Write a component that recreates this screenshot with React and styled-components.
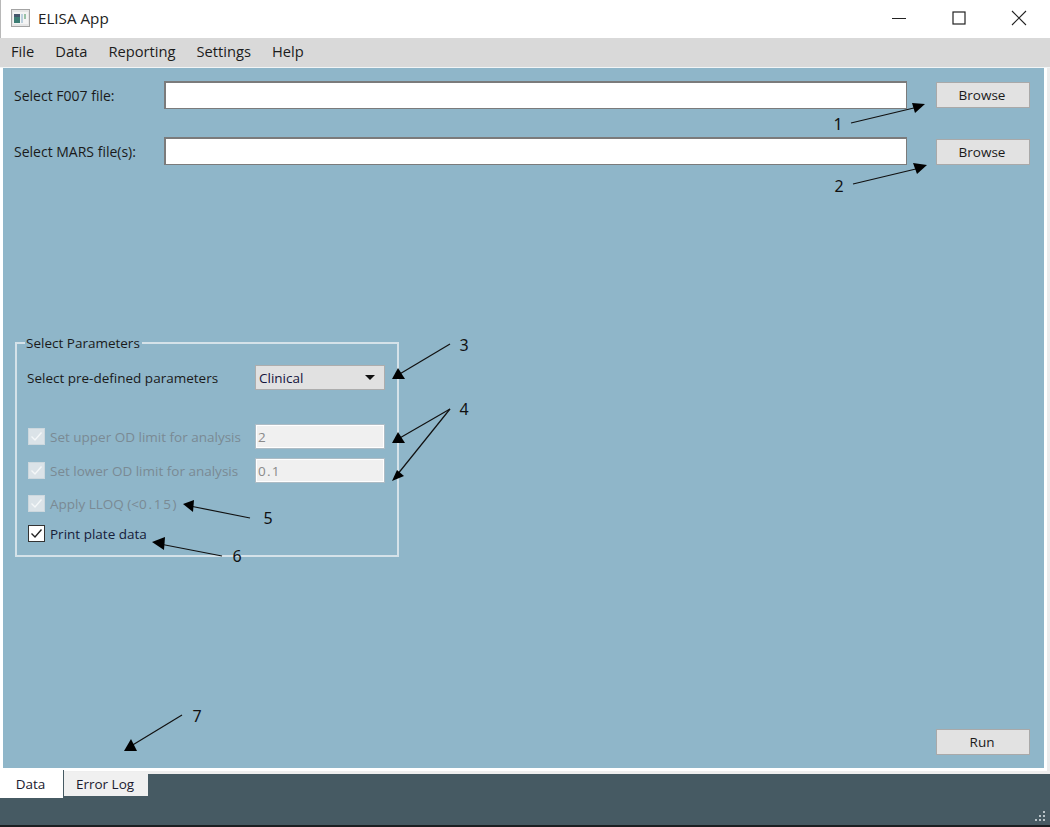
import React from "react";
import styled, { createGlobalStyle } from "styled-components";

const GlobalStyle = createGlobalStyle`
  html, body {
    margin: 0;
    padding: 0;
    overflow: hidden;
    background: #fff;
  }
  * {
    box-sizing: border-box;
  }
`;

const Window = styled.div`
  position: relative;
  width: 1050px;
  height: 827px;
  display: flex;
  flex-direction: column;
  font-family: "Open Sans", "Noto Sans", sans-serif;
  font-size: 13.5px;
  color: #1a1a1a;
  background: #fff;
  overflow: hidden;
`;

const TitleBar = styled.div`
  height: 38px;
  display: flex;
  align-items: center;
  background: #fff;
  padding: 0 1px 3px 10px;
  border-left: 1px solid #b8b8b8;
  flex-shrink: 0;
`;

const Title = styled.span`
  margin-left: 8px;
  font-size: 15.2px;
  color: #222;
  flex: 1;
`;

const WinControl = styled.div`
  width: 60px;
  height: 35px;
  display: flex;
  align-items: center;
  justify-content: center;
`;

const MenuBar = styled.div`
  height: 30px;
  display: flex;
  align-items: center;
  gap: 21px;
  padding: 0 0 3px 11px;
  background: #d9d9d9;
  border-bottom: 1px solid #f2f5f6;
  font-size: 14.7px;
  flex-shrink: 0;
`;

const MenuItem = styled.span`
  color: #1c1c1c;
`;

const Frame = styled.div`
  height: 703px;
  padding: 0 3px 3px 3px;
  background: #fff;
  border-right: 3px solid #ececec;
  flex-shrink: 0;
`;

const Panel = styled.main`
  height: 700px;
  background: #8fb6c9;
  padding: 13px 14px 13px 11px;
  display: flex;
  flex-direction: column;
`;

const FileRow = styled.div`
  display: flex;
  align-items: center;
  height: 28px;
  margin-bottom: 28px;
`;

const FileLabel = styled.label`
  width: 150px;
  flex-shrink: 0;
  font-size: 14px;
`;

const FileInput = styled.input`
  flex: 1;
  height: 28px;
  border: 1px solid #7b7b7b;
  border-width: 2px 1px 1px 2px;
  background: #fff;
  outline: none;
`;

const Button = styled.button`
  width: 94px;
  height: 26px;
  margin-left: 29px;
  margin-top: ${({ $nudge }) => $nudge || 0}px;
  background: #e2e2e2;
  border: 1px solid #a9a9a9;
  font-family: inherit;
  font-size: 13.5px;
  color: #1a1a1a;
  padding: 0 2px 0 0;
`;

const GroupBox = styled.fieldset`
  width: 384px;
  height: 223px;
  margin: 141px 0 0 1px;
  padding: 0 12px 0 10px;
  border: 2px solid #d5e2e9;
  border-radius: 0;
`;

const GroupLegend = styled.legend`
  margin-left: -2px;
  padding: 0 2px 0 1px;
  line-height: 18px;
`;

const ParamRow = styled.div`
  display: flex;
  align-items: center;
  height: 25px;
  margin-top: ${({ $top }) => $top}px;
`;

const ParamLabel = styled.span`
  width: 228px;
  flex-shrink: 0;
`;

const SelectBox = styled.div`
  width: 130px;
  height: 25px;
  display: flex;
  align-items: center;
  justify-content: space-between;
  padding: 0 9px 0 3px;
  background: #e1e1e1;
  border: 1px solid #adadad;
  color: #14143c;
`;

const Caret = styled.span`
  width: 0;
  height: 0;
  border-left: 5px solid transparent;
  border-right: 5px solid transparent;
  border-top: 5px solid #111;
`;

const CheckLabel = styled.label`
  display: flex;
  align-items: center;
  gap: 5px;
  width: 228px;
  padding-left: 1px;
  flex-shrink: 0;
  color: ${({ $off }) => ($off ? "#7a8a94" : "#16203a")};
`;

const CheckBox = styled.span`
  width: 17px;
  height: 17px;
  display: flex;
  align-items: center;
  justify-content: center;
  background: ${({ $off }) => ($off ? "#dbe3e8" : "#fff")};
  border: 1px solid ${({ $off }) => ($off ? "#cdd8de" : "#333")};
  flex-shrink: 0;
`;

const Spaced = styled.span`
  letter-spacing: 1.7px;
`;

const LimitInput = styled.input`
  width: 130px;
  height: 25px;
  padding: 0 2px;
  background: #f0f0f0;
  border: 1px solid #aebcc5;
  box-shadow: inset 0 0 0 1px #fff;
  font-family: inherit;
  font-size: 13.5px;
  letter-spacing: 1.2px;
  color: #8a8a8a;
  outline: none;
`;

const Spacer = styled.div`
  flex: 1;
`;

const RunRow = styled.div`
  display: flex;
  justify-content: flex-end;
`;

const TabStrip = styled.div`
  flex: 1;
  position: relative;
  display: flex;
  align-items: flex-start;
  background: linear-gradient(#eeeeee 0 3px, #465a63 3px);
`;

const Tab = styled.div`
  height: ${({ $active }) => ($active ? 28 : 24)}px;
  width: ${({ $width }) => $width}px;
  margin-top: ${({ $active }) => ($active ? -1 : 1)}px;
  display: flex;
  align-items: center;
  justify-content: center;
  padding-right: 2px;
  background: ${({ $active }) => ($active ? "#fff" : "#f0f0f0")};
  border-right: ${({ $active }) => ($active ? "1px solid #465a63" : "0")};
  color: #1a1a2e;
`;

const BottomEdge = styled.div`
  position: absolute;
  left: 0;
  right: 0;
  bottom: 0;
  height: 2px;
  background: #1b1f22;
`;

const Grip = styled.svg`
  position: absolute;
  right: 4px;
  bottom: 4px;
`;

const Overlay = styled.svg`
  position: absolute;
  left: 0;
  top: 0;
  pointer-events: none;
`;

const Callout = styled.text`
  font-family: "Noto Sans", "Open Sans", sans-serif;
  font-size: 16px;
  fill: #111;
  text-anchor: middle;
`;

const arrows = [
  { n: "1", at: [838, 130], from: [851, 123], to: [918, 107], head: "925,104 912,103 915,113" },
  { n: "2", at: [839, 192], from: [853, 184], to: [920, 168], head: "927,165 913,163 917,174" },
  { n: "3", at: [464, 351], from: [450, 344], to: [398, 375], head: "392,379 405,379 398,368" },
  { n: "4", at: [464, 415], from: [450, 409], to: [398, 439], head: "392,443 405,443 398,432" },
  { n: null, from: [450, 409], to: [397, 475], head: "392,481 404,476 397,470" },
  { n: "5", at: [268, 524], from: [250, 518], to: [190, 506], head: "183,504 194,500 193,512" },
  { n: "6", at: [237, 562], from: [222, 556], to: [160, 544], head: "152,542 165,537 164,550" },
  { n: "7", at: [197, 722], from: [182, 715], to: [131, 746], head: "124,751 137,751 131,739" },
];

function AppIcon() {
  return (
    <svg width="19" height="18" viewBox="0 0 19 18">
      <rect x="0.5" y="0.5" width="18" height="17" fill="#e6e6e6" stroke="#a3a3a3" />
      <rect x="2" y="3" width="15" height="12" fill="#f4f4f4" />
      <rect x="3" y="5" width="6" height="9" fill="#3d7d74" />
      <rect x="3" y="5" width="6" height="3" fill="#45566b" />
      <rect x="10" y="5" width="2" height="9" fill="#bcd0de" />
      <rect x="13" y="5" width="2" height="5" fill="#9ac3a7" />
    </svg>
  );
}

function Tick({ color }) {
  return (
    <svg width="13" height="11" viewBox="0 0 13 11">
      <path d="M1.5 5.5 L5 9 L11.5 1.5" fill="none" stroke={color} strokeWidth="1.4" />
    </svg>
  );
}

function CheckOption({ off, children }) {
  return (
    <CheckLabel $off={off}>
      <CheckBox $off={off}>
        <Tick color={off ? "#f4f7f8" : "#222"} />
      </CheckBox>
      {children}
    </CheckLabel>
  );
}

export default function App() {
  return (
    <>
      <GlobalStyle />
      <Window>
        <TitleBar>
          <AppIcon />
          <Title>ELISA App</Title>
          <WinControl>
            <svg width="14" height="14" viewBox="0 0 14 14">
              <path d="M0 7.5 H14" stroke="#222" strokeWidth="1" />
            </svg>
          </WinControl>
          <WinControl>
            <svg width="14" height="14" viewBox="0 0 14 14">
              <rect x="1" y="1" width="12" height="12" fill="none" stroke="#222" strokeWidth="1.2" />
            </svg>
          </WinControl>
          <WinControl>
            <svg width="16" height="16" viewBox="0 0 16 16">
              <path d="M1 1 L15 15 M15 1 L1 15" stroke="#222" strokeWidth="1.1" />
            </svg>
          </WinControl>
        </TitleBar>
        <MenuBar>
          <MenuItem>File</MenuItem>
          <MenuItem>Data</MenuItem>
          <MenuItem>Reporting</MenuItem>
          <MenuItem>Settings</MenuItem>
          <MenuItem>Help</MenuItem>
        </MenuBar>
        <Frame>
          <Panel>
            <FileRow>
              <FileLabel>Select F007 file:</FileLabel>
              <FileInput readOnly />
              <Button>Browse</Button>
            </FileRow>
            <FileRow>
              <FileLabel>Select MARS file(s):</FileLabel>
              <FileInput readOnly />
              <Button $nudge={2}>Browse</Button>
            </FileRow>
            <GroupBox>
              <GroupLegend>Select Parameters</GroupLegend>
              <ParamRow $top={13}>
                <ParamLabel>Select pre-defined parameters</ParamLabel>
                <SelectBox>
                  Clinical
                  <Caret />
                </SelectBox>
              </ParamRow>
              <ParamRow $top={34}>
                <CheckOption off>Set upper OD limit for analysis</CheckOption>
                <LimitInput disabled value="2" readOnly />
              </ParamRow>
              <ParamRow $top={9}>
                <CheckOption off>Set lower OD limit for analysis</CheckOption>
                <LimitInput disabled value="0.1" readOnly />
              </ParamRow>
              <ParamRow $top={8}>
                <CheckOption off>
                  <span>
                    Apply LLOQ (&lt;<Spaced>0.15</Spaced>)
                  </span>
                </CheckOption>
              </ParamRow>
              <ParamRow $top={5}>
                <CheckOption>Print plate data</CheckOption>
              </ParamRow>
            </GroupBox>
            <Spacer />
            <RunRow>
              <Button>Run</Button>
            </RunRow>
          </Panel>
        </Frame>
        <TabStrip>
          <Tab $active $width={64}>Data</Tab>
          <Tab $width={84}>Error Log</Tab>
          <Grip width="12" height="12" viewBox="0 0 12 12">
            <g fill="#b9c3c8">
              <rect x="9" y="0" width="2" height="2" />
              <rect x="5" y="4" width="2" height="2" />
              <rect x="9" y="4" width="2" height="2" />
              <rect x="1" y="8" width="2" height="2" />
              <rect x="5" y="8" width="2" height="2" />
              <rect x="9" y="8" width="2" height="2" />
            </g>
          </Grip>
          <BottomEdge />
        </TabStrip>
        <Overlay width="1050" height="827" viewBox="0 0 1050 827">
          {arrows.map(({ n, at, from, to, head }) => (
            <g key={head}>
              <line x1={from[0]} y1={from[1]} x2={to[0]} y2={to[1]} stroke="#111" strokeWidth="1.2" />
              <polygon points={head} fill="#000" />
              {n && (
                <Callout x={at[0]} y={at[1]}>
                  {n}
                </Callout>
              )}
            </g>
          ))}
        </Overlay>
      </Window>
    </>
  );
}
